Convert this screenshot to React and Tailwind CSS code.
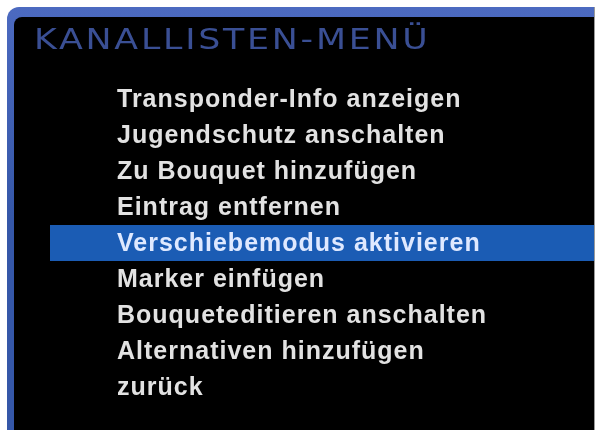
import React from 'react';

const items = [
  'Transponder-Info anzeigen',
  'Jugendschutz anschalten',
  'Zu Bouquet hinzufügen',
  'Eintrag entfernen',
  'Verschiebemodus aktivieren',
  'Marker einfügen',
  'Bouqueteditieren anschalten',
  'Alternativen hinzufügen',
  'zurück',
];

const selected = 4;

const App = () => {
  return (
    <div className="w-[598px] h-[432px] bg-white overflow-hidden pt-[7px] pl-[7px]">
      <div className="w-[588px] h-[423px] rounded-tl-[12px] bg-gradient-to-b from-[#4c6ac0] via-[#3557a8] to-[#3557a8] pt-[10px] pl-[7px] border-r border-[#9a9a9a]">
        <div className="h-full bg-black rounded-tl-[8px] flex flex-col">
          <div className="h-[64px] pl-[20px] pt-[7px]">
            <h1
              className="text-[29px] leading-[30px] font-normal tracking-[2.3px] text-[#3a4f94] blur-[0.3px] origin-left scale-x-[1.2] whitespace-nowrap"
              style={{ fontFamily: '"DejaVu Sans", "Liberation Sans", sans-serif' }}
            >
              KANALLISTEN-MENÜ
            </h1>
          </div>
          <ul
            className="flex flex-col font-bold text-[25px] tracking-[1px]"
            style={{ fontFamily: '"Liberation Sans", Arial, sans-serif' }}
          >
            {items.map((label, i) => (
              <li
                key={label}
                className={
                  i === selected
                    ? 'h-[36px] ml-[36px] pl-[67px] flex items-center bg-[#1b5cb4] text-[#dfe9ff]'
                    : 'h-[36px] ml-[36px] pl-[67px] flex items-center text-[#e2e2e2]'
                }
              >
                <span className="blur-[0.4px]">{label}</span>
              </li>
            ))}
          </ul>
        </div>
      </div>
    </div>
  );
};

export default App;
